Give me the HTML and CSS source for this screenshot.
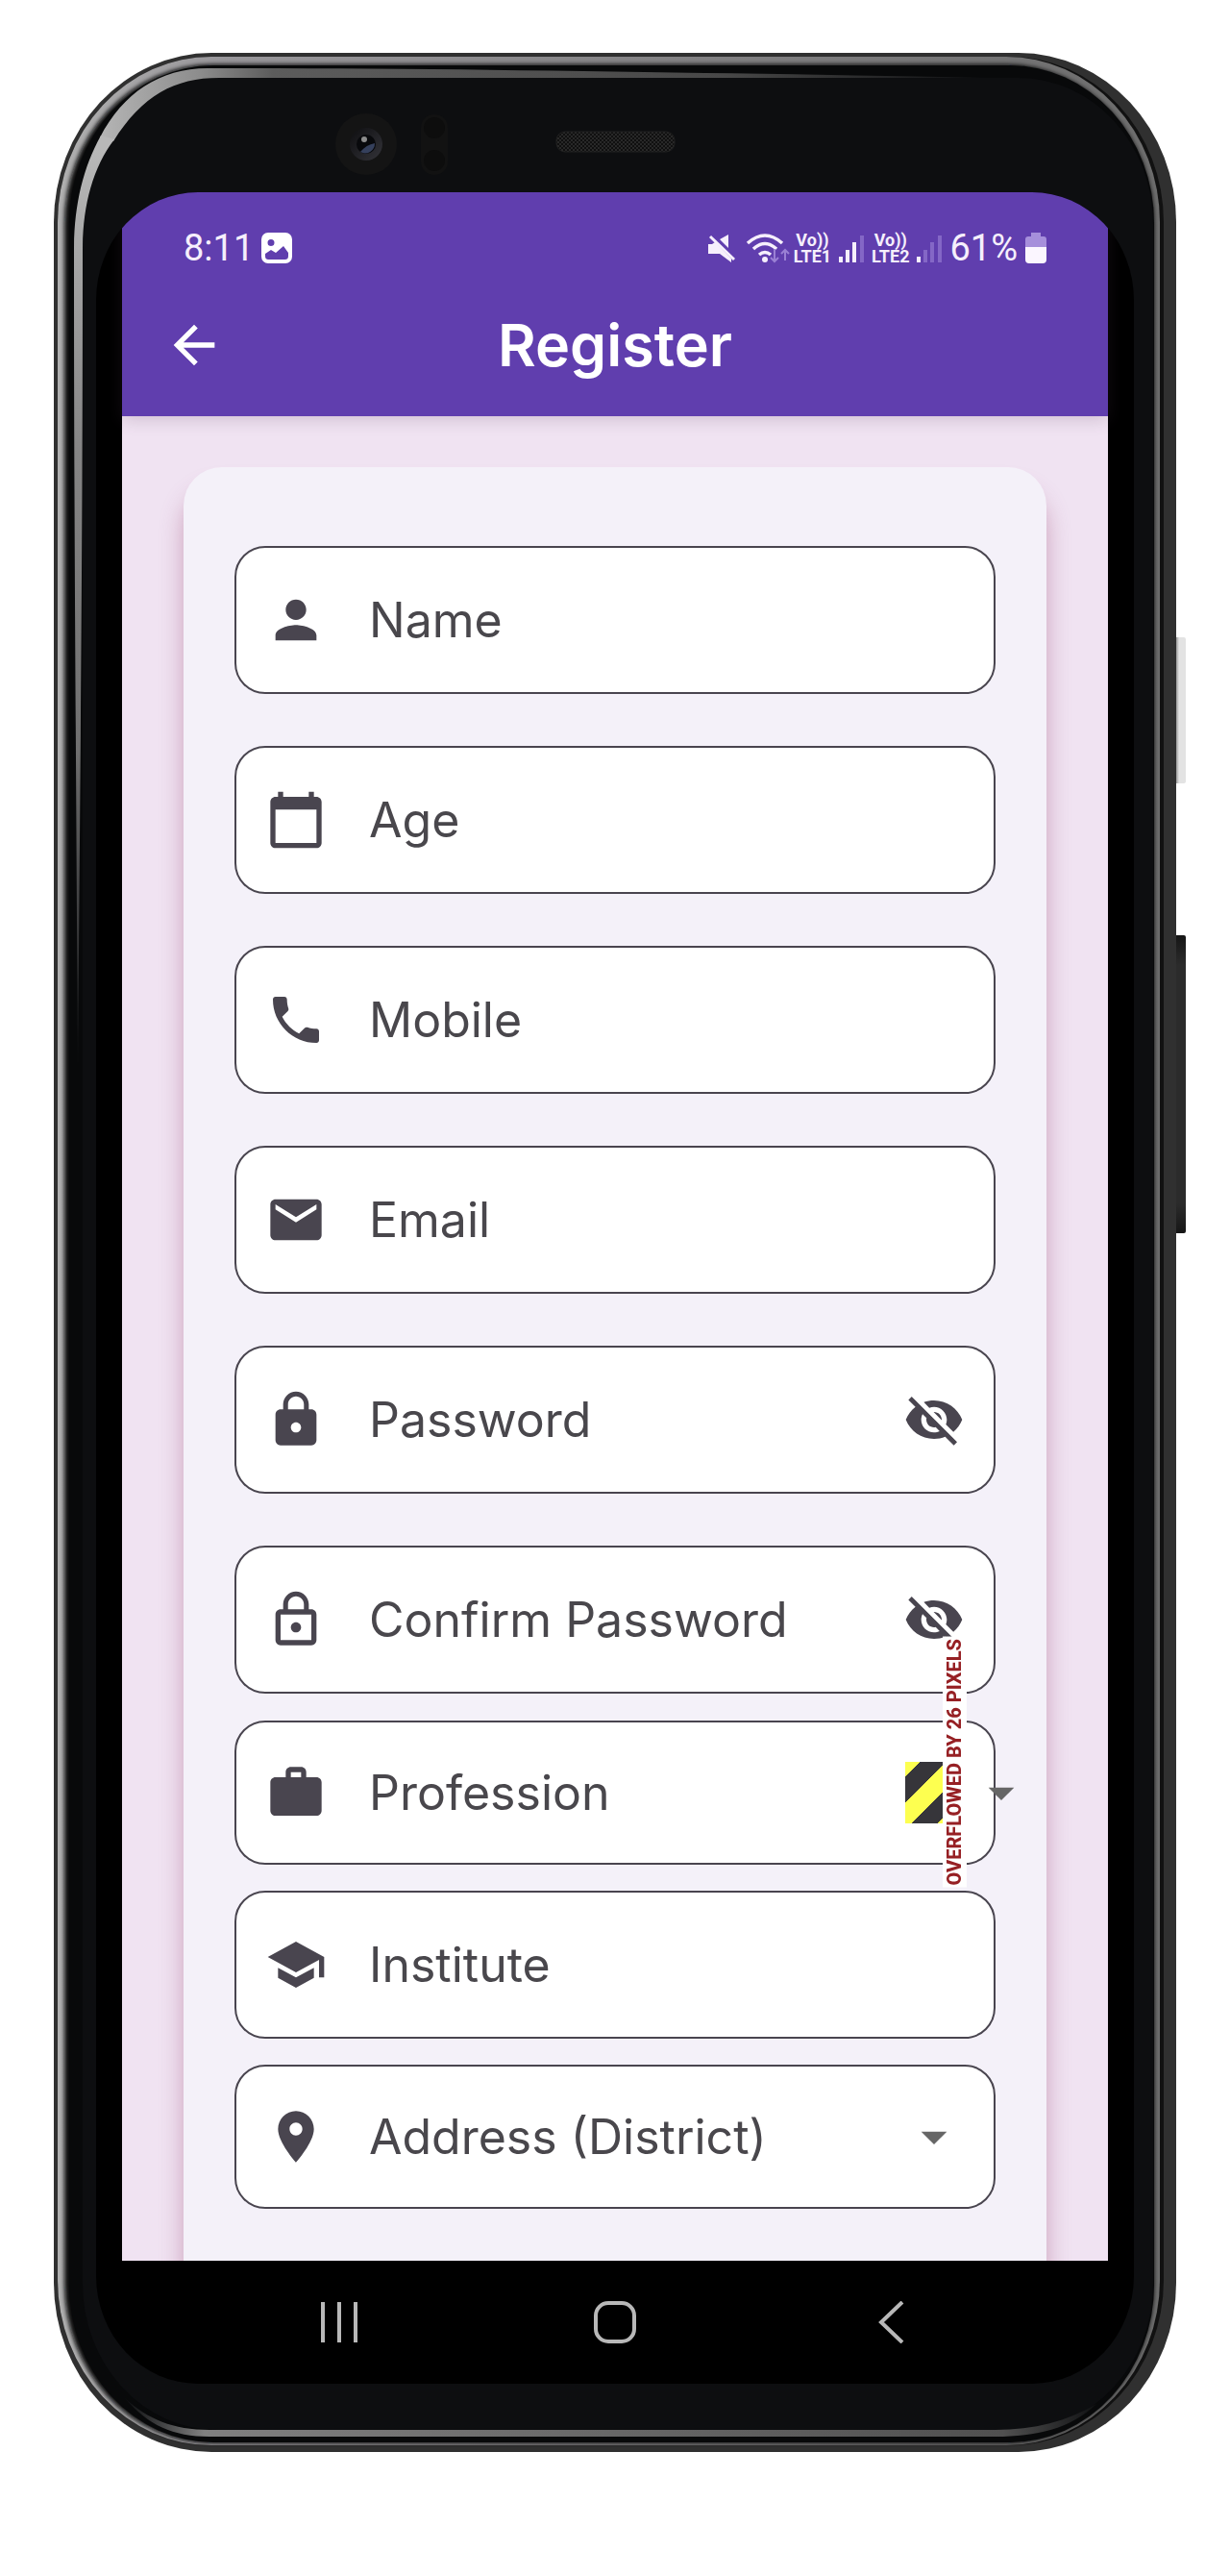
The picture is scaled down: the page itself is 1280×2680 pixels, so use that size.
FILE: index.html
```html
<!DOCTYPE html>
<html lang="en">
<head>
<meta charset="utf-8">
<meta name="viewport" content="width=device-width, initial-scale=1">
<title>Register</title>
<link rel="stylesheet" href="styles.css">
</head>
<body>
<main class="phone">
  <span class="side-button side-button--power"></span>
  <span class="side-button side-button--volume"></span>
  <svg class="shell" viewBox="0 0 1168 2496" preserveAspectRatio="none" aria-hidden="true">
    <defs>
      <linearGradient id="rim" x1="0" y1="0" x2="1" y2="0">
        <stop offset="0" stop-color="#b0b0b0"/><stop offset=".15" stop-color="#98969a"/><stop offset="1" stop-color="#6c6c6c"/>
      </linearGradient>
      <linearGradient id="topGlow" gradientUnits="userSpaceOnUse" x1="40" y1="0" x2="980" y2="0">
        <stop offset="0" stop-color="#b8b8b8"/><stop offset=".12" stop-color="#8c8c8c"/><stop offset=".2" stop-color="#5c5c5c"/><stop offset=".7" stop-color="#484848"/><stop offset="1" stop-color="#0d0e10"/>
      </linearGradient>
      <linearGradient id="leftGlow" gradientUnits="userSpaceOnUse" x1="0" y1="100" x2="0" y2="1060">
        <stop offset="0" stop-color="#b8b8b8"/><stop offset=".33" stop-color="#858585"/><stop offset=".65" stop-color="#707070"/><stop offset="1" stop-color="#0d0e10"/>
      </linearGradient>
      <linearGradient id="bottomGlow" gradientUnits="userSpaceOnUse" x1="75" y1="0" x2="1090" y2="0">
        <stop offset="0" stop-color="#0d0e10"/><stop offset=".08" stop-color="#808080"/><stop offset=".9" stop-color="#505050"/><stop offset="1" stop-color="#0d0e10"/>
      </linearGradient>
      <linearGradient id="lens" x1="0" y1="0" x2="1" y2="1">
        <stop offset="0" stop-color="#0e0e10"/><stop offset="1" stop-color="#34343a"/>
      </linearGradient>
      <pattern id="mesh" width="4" height="4" patternUnits="userSpaceOnUse">
        <rect width="4" height="4" fill="#101010"/><path d="M0 0h2v2H0zM2 2h2v2H2z" fill="#282828"/>
      </pattern>
      <filter id="soft"><feGaussianBlur stdDeviation="2"/></filter>
    </defs>
    <rect width="1168" height="2496" rx="164" ry="176" fill="#303030"/>
    <rect x="4" y="4" width="1151" height="2485" rx="160" ry="172" fill="#111"/>
    <rect x="4" y="4" width="1147" height="2485" rx="160" ry="172" fill="url(#rim)"/>
    <rect x="11" y="12" width="1134" height="2475" rx="154" ry="166" fill="#08090a" filter="url(#soft)"/>
    <rect x="16" y="13" width="1129" height="2473" rx="150" ry="164" fill="#08090a"/>
    <rect x="30" y="26" width="1114" height="2447" rx="140" ry="152" fill="#0d0e10"/>
    <path d="M48 88C72 42 110 16 160 16C480 16 720 22 980 26H172C126 26 92 44 62 92Z" fill="url(#topGlow)"/>
    <path d="M63 90C40 120 30 160 30 205C30 500 28 700 25 1060C23 700 21 500 21 205C21 160 30 120 49 86Z" fill="url(#leftGlow)"/>
    <path d="M74 2440C98 2462 124 2473 162 2473H980C1020 2473 1055 2464 1085 2446C1058 2472 1022 2480 980 2480H162C124 2480 98 2468 74 2440Z" fill="url(#bottomGlow)"/>
    <circle cx="325" cy="95" r="32" fill="#141414"/>
    <circle cx="325" cy="95" r="17" fill="url(#lens)"/>
    <circle cx="325" cy="95" r="10" fill="#08090c"/>
    <path d="M319 103a10 10 0 0 0 15-9c-6 1-11 4-15 9z" fill="#35405c"/>
    <circle cx="323" cy="90" r="3" fill="#8c8c8c"/>
    <rect x="382" y="64" width="28" height="63" rx="14" fill="#121212"/>
    <circle cx="396" cy="78" r="11" fill="#0d0d0d"/><circle cx="396" cy="112" r="11" fill="#0d0d0d"/>
    <rect x="523" y="82" width="123" height="21" rx="9" fill="url(#mesh)" stroke="#202020"/>
  </svg>

  <div class="screen">
    <header class="app-header">
      <div class="status">
        <div class="status__group">
          <span class="status__text">8:11</span>
          <svg width="32" height="32" viewBox="0 0 32 32" aria-hidden="true"><path fill="#fff" fill-rule="evenodd" d="M7 0h18a7 7 0 0 1 7 7v18a7 7 0 0 1-7 7H7a7 7 0 0 1-7-7V7a7 7 0 0 1 7-7zm-3 24c0 3 1 4 4 4h16c3 0 4-1 4-4v-3l-5-7-8 7-5-3-6 4zM10 7a3.500 3.500 0 1 0 0 7 3.500 3.500 0 0 0 0-7z"/></svg>
        </div>
        <div class="status__group">
          <svg width="28" height="30" viewBox="0 0 28 30" aria-hidden="true"><path d="M0 11h4l3-2L24 26v4L12 21H0zM12 6l9-5v14z" fill="#f6effc"/><path d="M2 3l25 24" stroke="#f6effc" stroke-width="3"/></svg>
          <svg class="overflowing" width="45" height="32" viewBox="0 0 45 32" fill="none" aria-hidden="true"><g stroke="#f6effc" stroke-width="3.500"><path d="M5 11q18-16 36 0"/><path d="M11 17q12-11 24 0"/><path d="M17 23q6-5 12 0"/></g><circle cx="23" cy="28" r="3" fill="#f6effc"/><path d="M33 17v13m-4-4l4 4 4-4M44 29V18m-4 4l4-4 4 4" stroke="#9a80d4" stroke-width="2"/></svg>
          <span class="lte">Vo))<br>LTE1</span>
          <svg width="26" height="30" viewBox="0 0 26 30" aria-hidden="true"><path d="M0 24h4v6H0zM7 17h4v13H7zM14 9h4v21h-4z" fill="#f6effc"/><path d="M22 2h4v28h-4z" fill="#8467c6"/></svg>
          <span class="lte">Vo))<br>LTE2</span>
          <svg width="26" height="30" viewBox="0 0 26 30" aria-hidden="true"><path d="M0 24h4v6H0z" fill="#f6effc"/><path d="M7 17h4v13H7zM14 9h4v21h-4zM22 2h4v28h-4z" fill="#8467c6"/></svg>
          <span class="status__text">61%</span>
          <svg width="22" height="32" viewBox="0 0 22 32" aria-hidden="true"><path d="M6 0h10v4h3q3 0 3 3v9H0V7q0-3 3-3h3z" fill="#a68fdb"/><path d="M0 15h22v13q0 4-4 4H4q-4 0-4-4z" fill="#fbf6ff"/></svg>
        </div>
      </div>
      <div class="app-bar">
        <button class="icon-button" type="button" aria-label="Back"><svg class="icon" viewBox="0 0 24 24"><path d="M20 11H7.830l5.590-5.590L12 4l-8 8 8 8 1.410-1.410L7.830 13H20v-2z"/></svg></button>
        <h1 class="app-bar__title">Register</h1>
      </div>
    </header>

    <div class="content">
      <form class="card">
        <div class="fields">
          <label class="field"><svg class="icon" viewBox="0 0 24 24"><path d="M12 12c2.210 0 4-1.790 4-4s-1.790-4-4-4-4 1.790-4 4 1.790 4 4 4zm0 2c-2.670 0-8 1.340-8 4v2h16v-2c0-2.660-5.330-4-8-4z"/></svg><input class="field__input" type="text" aria-label="Name" placeholder="Name"></label>
          <label class="field"><svg class="icon" viewBox="0 0 24 24"><path d="M20 3h-1V1h-2v2H7V1H5v2H4c-1.100 0-2 .9-2 2v16c0 1.100.9 2 2 2h16c1.100 0 2-.9 2-2V5c0-1.100-.9-2-2-2zm0 18H4V8h16v13z"/></svg><input class="field__input" type="text" inputmode="numeric" aria-label="Age" placeholder="Age"></label>
          <label class="field"><svg class="icon" viewBox="0 0 24 24"><path d="M6.620 10.790c1.440 2.830 3.760 5.140 6.590 6.590l2.200-2.200c.27-.27.67-.36 1.020-.24 1.120.37 2.330.57 3.570.57.55 0 1 .45 1 1V20c0 .55-.45 1-1 1-9.390 0-17-7.610-17-17 0-.55.45-1 1-1h3.500c.55 0 1 .45 1 1 0 1.250.2 2.450.57 3.570.11.35.03.74-.25 1.020l-2.200 2.200z"/></svg><input class="field__input" type="tel" aria-label="Mobile" placeholder="Mobile"></label>
          <label class="field"><svg class="icon" viewBox="0 0 24 24"><path d="M20 4H4c-1.100 0-1.990.9-1.990 2L2 18c0 1.100.9 2 2 2h16c1.100 0 2-.9 2-2V6c0-1.100-.9-2-2-2zm0 4l-8 5-8-5V6l8 5 8-5v2z"/></svg><input class="field__input" type="email" aria-label="Email" placeholder="Email"></label>
          <div class="field"><svg class="icon" viewBox="0 0 24 24"><path d="M18 8h-1V6c0-2.760-2.240-5-5-5S7 3.240 7 6v2H6c-1.100 0-2 .9-2 2v10c0 1.100.9 2 2 2h12c1.100 0 2-.9 2-2V10c0-1.100-.9-2-2-2zm-6 9c-1.100 0-2-.9-2-2s.9-2 2-2 2 .9 2 2-.9 2-2 2zm3.100-9H8.900V6c0-1.710 1.390-3.100 3.100-3.100 1.710 0 3.100 1.390 3.100 3.100v2z"/></svg><input class="field__input" type="password" aria-label="Password" placeholder="Password"><button class="icon-button" type="button" aria-label="Show password"><svg class="icon" viewBox="0 0 24 24"><path d="M12 7c2.760 0 5 2.240 5 5 0 .65-.13 1.260-.36 1.830l2.920 2.920c1.510-1.260 2.700-2.890 3.430-4.750-1.730-4.390-6-7.500-11-7.500-1.400 0-2.740.25-3.980.7l2.160 2.160C10.740 7.130 11.350 7 12 7zM2 4.270l2.280 2.280.46.46C3.080 8.300 1.780 10.020 1 12c1.730 4.390 6 7.500 11 7.500 1.550 0 3.030-.3 4.380-.84l.42.42L19.730 22 21 20.730 3.270 3 2 4.270zM7.530 9.800l1.550 1.550c-.05.21-.08.43-.08.65 0 1.660 1.340 3 3 3 .22 0 .44-.03.65-.08l1.550 1.550c-.67.33-1.410.53-2.200.53-2.760 0-5-2.240-5-5 0-.79.2-1.530.53-2.200zm4.310-.78l3.150 3.150.02-.16c0-1.660-1.340-3-3-3l-.17.01z"/></svg></button></div>
          <div class="field"><svg class="icon" viewBox="0 0 24 24"><path d="M12 17c1.100 0 2-.9 2-2s-.9-2-2-2-2 .9-2 2 .9 2 2 2zm6-9h-1V6c0-2.760-2.240-5-5-5S7 3.240 7 6v2H6c-1.100 0-2 .9-2 2v10c0 1.100.9 2 2 2h12c1.100 0 2-.9 2-2V10c0-1.100-.9-2-2-2zM8.900 6c0-1.710 1.390-3.100 3.100-3.100s3.100 1.390 3.100 3.100v2H8.900V6zM18 20H6V10h12v10z"/></svg><input class="field__input" type="password" aria-label="Confirm Password" placeholder="Confirm Password"><button class="icon-button" type="button" aria-label="Show confirmed password"><svg class="icon" viewBox="0 0 24 24"><path d="M12 7c2.760 0 5 2.240 5 5 0 .65-.13 1.260-.36 1.830l2.920 2.920c1.510-1.260 2.700-2.890 3.430-4.750-1.730-4.390-6-7.500-11-7.500-1.400 0-2.740.25-3.980.7l2.160 2.160C10.740 7.130 11.350 7 12 7zM2 4.270l2.280 2.280.46.46C3.080 8.300 1.780 10.020 1 12c1.730 4.390 6 7.500 11 7.500 1.550 0 3.030-.3 4.380-.84l.42.42L19.730 22 21 20.730 3.270 3 2 4.270zM7.530 9.800l1.550 1.550c-.05.21-.08.43-.08.65 0 1.660 1.340 3 3 3 .22 0 .44-.03.65-.08l1.550 1.550c-.67.33-1.410.53-2.200.53-2.760 0-5-2.240-5-5 0-.79.2-1.530.53-2.200zm4.310-.78l3.150 3.150.02-.16c0-1.660-1.340-3-3-3l-.17.01z"/></svg></button></div>
        </div>
        <div class="fields fields--tight">
          <div class="field field--select"><svg class="icon" viewBox="0 0 24 24"><path d="M20 6h-4V4c0-1.110-.89-2-2-2h-4c-1.110 0-2 .89-2 2v2H4c-1.110 0-2 .89-2 2v11c0 1.110.89 2 2 2h16c1.110 0 2-.89 2-2V8c0-1.110-.89-2-2-2zm-6 0h-4V4h4v2z"/></svg><select class="field__input" aria-label="Profession"><option>Profession</option></select>
            <svg class="icon icon--caret icon--overflowed" viewBox="0 0 24 24"><path d="M7 10l5 5 5-5z"/></svg>
            <span class="hazard"></span>
            <span class="overflow-note">OVERFLOWED BY 26 PIXELS</span>
          </div>
          <label class="field"><svg class="icon" viewBox="0 0 24 24"><path d="M5 13.180v4L12 21l7-3.820v-4L12 17l-7-3.820zM12 3L1 9l11 6 9-4.910V17h2V9L12 3z"/></svg><input class="field__input" type="text" aria-label="Institute" placeholder="Institute"></label>
          <div class="field field--select"><svg class="icon" viewBox="0 0 24 24"><path d="M12 2C8.130 2 5 5.130 5 9c0 5.250 7 13 7 13s7-7.750 7-13c0-3.870-3.130-7-7-7zm0 9.500c-1.380 0-2.500-1.120-2.500-2.500s1.120-2.500 2.500-2.500 2.500 1.120 2.500 2.500-1.120 2.500-2.500 2.500z"/></svg><select class="field__input" aria-label="Address (District)"><option>Address (District)</option></select><svg class="icon icon--caret" viewBox="0 0 24 24"><path d="M7 10l5 5 5-5z"/></svg></div>
        </div>
      </form>
    </div>

    <nav class="nav" aria-label="System">
      <button type="button" aria-label="Recent apps"><svg width="44" height="44" viewBox="0 0 44 44"><path d="M5 1v42M22 1v42M39 1v42"/></svg></button>
      <button type="button" aria-label="Home"><svg width="44" height="44" viewBox="0 0 44 44"><rect x="2" y="2" width="40" height="40" rx="13"/></svg></button>
      <button type="button" aria-label="Back"><svg width="44" height="44" viewBox="0 0 44 44"><path d="M34 1L12 22l22 21"/></svg></button>
    </nav>
  </div>
</main>
</body>
</html>
```
FILE: styles.css
```css
* { box-sizing: border-box; }

body {
  margin: 0;
  padding: 55px 56px 129px;
  background: #fff;
  font-family: Inter, "Liberation Sans", sans-serif;
}

button {
  margin: 0;
  padding: 0;
  border: 0;
  background: none;
  color: inherit;
}

svg { display: block; flex: none; }

/* Device */
.phone {
  position: relative;
  padding: 145px 44px 71px;
}

.shell {
  position: absolute;
  inset: 0;
  width: 100%;
  height: 100%;
}

.side-button {
  position: absolute;
  left: 100%;
  width: 10px;
  border-radius: 0 2px 2px 0;
}

.side-button--power {
  top: 608px;
  height: 152px;
  background: linear-gradient(90deg, #999, #e3e3e3 30%);
}

.side-button--volume {
  top: 918px;
  height: 310px;
  background: linear-gradient(#161616, #2b2b2b 10%, #2b2b2b 90%, #161616);
}

.screen {
  position: relative;
  padding: 0 27px;
  border-radius: 106px / 112px;
  background: #000;
  overflow: hidden;
}

/* Header */
.app-header {
  position: relative;
  background: #603eae;
  color: #fff;
  box-shadow: 0 4px 16px rgba(90, 60, 90, .2);
}

.status {
  display: flex;
  justify-content: space-between;
  padding: 31px 64px 0;
}

.status__group {
  display: flex;
  align-items: center;
  gap: 8px;
  height: 54px;
}

.status__text {
  font: 400 38px/54px Roboto, sans-serif;
  color: #f6effc;
}

.overflowing { overflow: visible; }

.lte {
  font: 700 18px/17px Roboto, sans-serif;
  text-align: center;
  color: #f6effc;
}

.app-bar {
  display: grid;
  grid-template-columns: 64px 1fr 64px;
  align-items: center;
  height: 148px;
  padding: 0 43px;
}

.app-bar__title {
  margin: 0;
  font-size: 61px;
  font-weight: 600;
  line-height: 80px;
  text-align: center;
}

.icon {
  width: 64px;
  height: 64px;
  fill: currentColor;
}

/* Form */
.content {
  padding: 53px 64px 0;
  background: #f0e3f2;
  overflow: hidden;
}

.card {
  display: flex;
  flex-direction: column;
  gap: 28px;
  padding: 82px 53px 54px;
  border-radius: 40px 40px 0 0;
  background: #f4f1f9;
  box-shadow: 0 24px 24px rgba(160, 80, 120, .45);
}

.fields {
  display: flex;
  flex-direction: column;
  gap: 54px;
}

.fields--tight { gap: 27px; }

.field {
  position: relative;
  display: flex;
  align-items: center;
  height: 154px;
  padding: 0 30px;
  border: 2px solid #49454f;
  border-radius: 32px;
  background: #fff;
  color: #49454f;
}

.field--select { height: 150px; }

.field__input {
  flex: 1;
  min-width: 0;
  margin: 0;
  padding: 0 0 0 44px;
  border: 0;
  background: none;
  color: #49474c;
  font: 400 50px/72px Inter, "Liberation Sans", sans-serif;
  appearance: none;
}

.field__input::placeholder { color: #49474c; opacity: 1; }

.icon--caret { color: #666; }

.icon--overflowed {
  position: absolute;
  right: -40px;
}

.hazard {
  position: absolute;
  right: 53px;
  width: 39px;
  height: 64px;
  background: linear-gradient(135deg, #fdff50 11px, #36353a 11px, #36353a 30px, #fdff50 30px, #fdff50 50px, #36353a 50px, #36353a 69px, #fdff50 69px);
}

.overflow-note {
  position: absolute;
  right: 28px;
  bottom: -26px;
  padding: 2px 0;
  background: #fff;
  color: #962024;
  font: 800 20px/25px Roboto, sans-serif;
  white-space: nowrap;
  writing-mode: vertical-rl;
  transform: rotate(180deg);
}

/* System navigation */
.nav {
  display: grid;
  grid-template-columns: repeat(3, 1fr);
  height: 128px;
  padding: 0 8%;
}

.nav button {
  display: flex;
  justify-content: center;
  align-items: center;
}

.nav svg {
  fill: none;
  stroke: #b8b8b8;
  stroke-width: 4;
}
```
